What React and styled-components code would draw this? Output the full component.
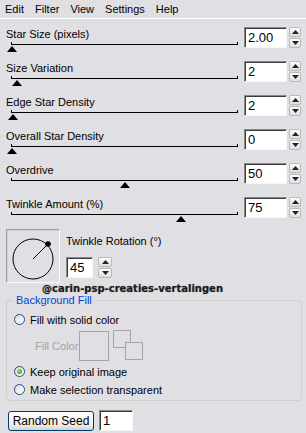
import React from "react";
import styled, { createGlobalStyle } from "styled-components";

const GlobalStyle = createGlobalStyle`
  html, body {
    margin: 0;
    padding: 0;
    background: #e0dfe3;
  }
  body {
    font-family: "Liberation Sans", Arial, sans-serif;
    font-size: 11px;
    color: #000;
  }
`;

const Window = styled.div`
  width: 306px;
  height: 433px;
  background: #e0dfe3;
  overflow: hidden;
`;

const MenuBar = styled.div`
  display: flex;
  align-items: center;
  gap: 11px;
  height: 18px;
  padding-left: 5px;
  border-bottom: 1px solid #fff;
`;

const Panel = styled.div`
  padding: 8px 0 0 6px;
`;

const Row = styled.div`
  display: flex;
  height: 34px;
`;

const SliderCol = styled.div`
  width: 232px;
`;

const Label = styled.div`
  height: 14px;
  line-height: 14px;
  white-space: nowrap;
`;

const Track = styled.div`
  position: relative;
  margin: 3px 0 0 5px;
  width: 227px;
  height: 1px;
  background: #000;
  &::before,
  &::after {
    content: "";
    position: absolute;
    top: -2px;
    width: 1px;
    height: 2px;
    background: #000;
  }
  &::before {
    left: 0;
  }
  &::after {
    right: 0;
  }
`;

const Thumb = styled.div`
  position: absolute;
  top: 2px;
  width: 0;
  height: 0;
  border-left: 5px solid transparent;
  border-right: 5px solid transparent;
  border-bottom: 6px solid #000;
  transform: translateX(-50%);
`;

const Field = styled.div`
  box-sizing: border-box;
  width: ${(p) => p.$w}px;
  height: 21px;
  margin-left: ${(p) => p.$ml || 0}px;
  background: #fff;
  border: 1px solid;
  border-color: #8a8a8a #f6f6f6 #f6f6f6 #8a8a8a;
  box-shadow: inset 1px 1px 0 #3c3c3c;
  font-size: 13px;
  line-height: 19px;
  padding-left: 3px;
`;

const Spin = styled.div`
  display: flex;
  flex-direction: column;
  gap: 1px;
  width: ${(p) => p.$w || 12}px;
  margin-left: ${(p) => p.$ml || 2}px;
`;

const SpinBtn = styled.div`
  box-sizing: border-box;
  height: 10px;
  display: flex;
  align-items: center;
  justify-content: center;
  border: 1px solid #b9b9b9;
  border-radius: 2px;
  background: linear-gradient(#fdfdfd, #dedede);
`;

const DialRow = styled.div`
  display: flex;
  margin-top: -2px;
`;

const DialBox = styled.div`
  box-sizing: border-box;
  width: 54px;
  height: 54px;
  border: 1px solid;
  border-color: #a2a2a2 #fbfbfb #fbfbfb #a2a2a2;
  box-shadow: inset 1px 1px 0 #cfcfcf;
`;

const DialSide = styled.div`
  padding: 5px 0 0 6px;
`;

const InputLine = styled.div`
  display: flex;
  margin-top: ${(p) => p.$mt || 0}px;
`;

const Watermark = styled.div`
  margin: 0 0 0 36px;
  height: 11px;
  line-height: 11px;
  font-family: "DejaVu Sans", sans-serif;
  font-weight: bold;
  font-size: 10px;
  color: #1c1c1c;
  text-shadow: 0 0 1px #777;
`;

const Group = styled.div`
  position: relative;
  box-sizing: border-box;
  width: 296px;
  height: 101px;
  margin-top: 6px;
  padding: 12px 0 0 7px;
  border: 1px solid #cfcfc8;
  border-radius: 4px;
`;

const Legend = styled.span`
  position: absolute;
  top: -6px;
  left: 6px;
  padding: 0 3px;
  background: #e0dfe3;
  color: #0046d5;
  line-height: 11px;
`;

const RadioRow = styled.div`
  display: flex;
  align-items: center;
  gap: 5px;
  height: 13px;
  margin-top: ${(p) => p.$mt || 0}px;
`;

const Radio = styled.span`
  box-sizing: border-box;
  width: 11px;
  height: 11px;
  border-radius: 50%;
  border: 1px solid #1c5180;
  background: linear-gradient(135deg, #dcdcd6, #fff);
  display: flex;
  align-items: center;
  justify-content: center;
  &::after {
    content: "";
    display: ${(p) => (p.$on ? "block" : "none")};
    width: 5px;
    height: 5px;
    border-radius: 50%;
    background: radial-gradient(circle at 35% 35%, #7fe07f, #21a121);
  }
`;

const FillRow = styled.div`
  display: flex;
  align-items: center;
  margin: 4px 0 0 21px;
`;

const Dim = styled.span`
  width: 44px;
  color: #a4a4a4;
`;

const Swatch = styled.div`
  box-sizing: border-box;
  width: 30px;
  height: 30px;
  border: 1px solid #a4a4a4;
`;

const Bottom = styled.div`
  display: flex;
  align-items: center;
  margin-top: 9px;
  padding-left: 2px;
`;

const Button = styled.button`
  box-sizing: border-box;
  width: 86px;
  height: 20px;
  padding: 0;
  border: 1px solid #003c74;
  border-radius: 3px;
  background: linear-gradient(#ffffff, #f0efea 70%, #d8d3c8);
  font-family: "Liberation Sans", Arial, sans-serif;
  font-size: 12px;
  color: #000;
`;

const Arrow = ({ up }) => (
  <svg width="7" height="4" viewBox="0 0 7 4">
    <path d={up ? "M0 4 L3.5 0 L7 4 Z" : "M0 0 L3.5 4 L7 0 Z"} fill="#222" />
  </svg>
);

const Spinner = ({ w, ml }) => (
  <Spin $w={w} $ml={ml}>
    <SpinBtn>
      <Arrow up />
    </SpinBtn>
    <SpinBtn>
      <Arrow />
    </SpinBtn>
  </Spin>
);

const sliders = [
  { label: "Star Size (pixels)", value: "2.00", pct: 0 },
  { label: "Size Variation", value: "2", pct: 2 },
  { label: "Edge Star Density", value: "2", pct: 0.6 },
  { label: "Overall Star Density", value: "0", pct: 0 },
  { label: "Overdrive", value: "50", pct: 50 },
  { label: "Twinkle Amount (%)", value: "75", pct: 75 },
];

export default function App() {
  return (
    <Window>
      <GlobalStyle />
      <MenuBar>
        <span>Edit</span>
        <span>Filter</span>
        <span>View</span>
        <span>Settings</span>
        <span>Help</span>
      </MenuBar>
      <Panel>
        {sliders.map((s) => (
          <Row key={s.label}>
            <SliderCol>
              <Label>{s.label}</Label>
              <Track>
                <Thumb style={{ left: 1 + s.pct * 2.25 }} />
              </Track>
            </SliderCol>
            <Field $w={43} $ml={6}>
              {s.value}
            </Field>
            <Spinner />
          </Row>
        ))}
        <DialRow>
          <DialBox>
            <svg width="52" height="52" viewBox="0 0 52 52">
              <circle cx="26" cy="29" r="20" fill="none" stroke="#000" strokeWidth="1" />
              <line x1="26" y1="29" x2="40.5" y2="14.5" stroke="#000" strokeWidth="1" />
              <circle cx="41" cy="14" r="2.8" fill="#000" />
            </svg>
          </DialBox>
          <DialSide>
            <Label>Twinkle Rotation (°)</Label>
            <InputLine $mt={9}>
              <Field $w={27}>45</Field>
              <Spinner w={14} ml={5} />
            </InputLine>
          </DialSide>
        </DialRow>
        <Watermark>@carin-psp-creaties-vertalingen</Watermark>
        <Group>
          <Legend>Background Fill</Legend>
          <RadioRow>
            <Radio />
            <span>Fill with solid color</span>
          </RadioRow>
          <FillRow>
            <Dim>Fill Color</Dim>
            <Swatch />
            <svg width="31" height="31" viewBox="0 0 31 31" style={{ marginLeft: 4 }}>
              <rect x="0.5" y="0.5" width="17" height="17" fill="none" stroke="#a4a4a4" />
              <rect x="12.5" y="12.5" width="17" height="17" fill="#e0dfe3" stroke="#a4a4a4" />
            </svg>
          </FillRow>
          <RadioRow $mt={4}>
            <Radio $on />
            <span>Keep original image</span>
          </RadioRow>
          <RadioRow $mt={5}>
            <Radio />
            <span>Make selection transparent</span>
          </RadioRow>
        </Group>
        <Bottom>
          <Button>Random Seed</Button>
          <Field $w={34} $ml={5}>
            1
          </Field>
        </Bottom>
      </Panel>
    </Window>
  );
}
